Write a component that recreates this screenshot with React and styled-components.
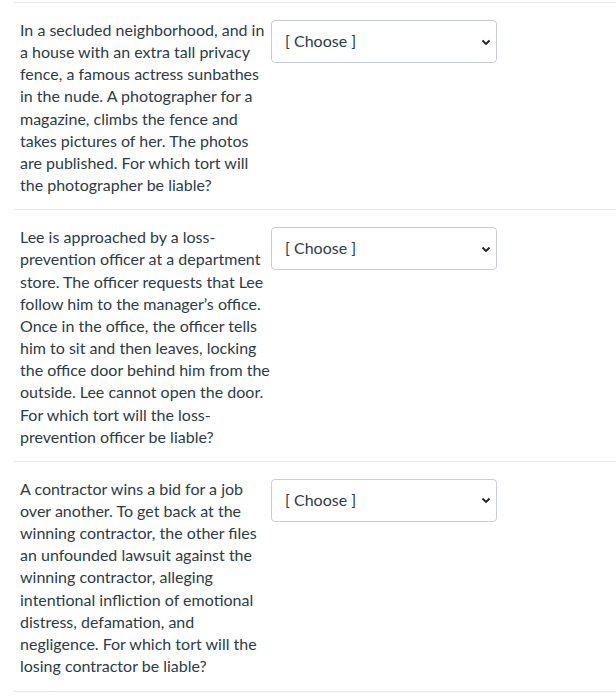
import styled, { createGlobalStyle } from "styled-components";

const GlobalStyle = createGlobalStyle`
  body {
    margin: 0;
    background: #fff;
    font-family: Lato, "Noto Sans", sans-serif;
    color: #2d3b45;
  }
`;

const List = styled.div`
  padding: 2px 0 0 14px;
`;

const Row = styled.div`
  display: flex;
  align-items: flex-start;
  gap: 1px;
  border-top: 1px solid #e4e6e8;
  padding: 16px 0 ${(p) => p.$bottom || 12}px 6px;
  &:last-child {
    border-bottom: 1px solid #e4e6e8;
  }
`;

const Question = styled.div`
  width: 250px;
  font-size: 16px;
  line-height: 22.15px;
`;

const Select = styled.div`
  width: 224px;
  height: 41px;
  margin-top: 1px;
  border: 1px solid #c7cdd1;
  border-radius: 4px;
  box-sizing: content-box;
  display: flex;
  align-items: center;
  font-size: 16px;
  color: #2d3b45;
  white-space: pre;
`;

const Label = styled.span`
  margin-left: 13px;
  flex: 1;
  margin-top: -2px;
`;

const Chevron = styled.svg`
  width: 10px;
  height: 10px;
  margin-right: 5px;
`;

const questions = [
  {
    text: "In a secluded neighborhood, and in a house with an extra tall privacy fence, a famous actress sunbathes in the nude. A photographer for a magazine, climbs the fence and takes pictures of her. The photos are published. For which tort will the photographer be liable?",
    bottom: 13,
  },
  {
    text: "Lee is approached by a loss-prevention officer at a department store. The officer requests that Lee follow him to the manager\u2019s office. Once in the office, the officer tells him to sit and then leaves, locking the office door behind him from the outside. Lee cannot open the door. For which tort will the loss-prevention officer be liable?",
    bottom: 13,
  },
  {
    text: "A contractor wins a bid for a job over another. To get back at the winning contractor, the other files an unfounded lawsuit against the winning contractor, alleging intentional infliction of emotional distress, defamation, and negligence. For which tort will the losing contractor be liable?",
    bottom: 14,
  },
];

export default function App() {
  return (
    <>
      <GlobalStyle />
      <List>
        {questions.map((q, i) => (
          <Row key={i} $bottom={q.bottom}>
            <Question>{q.text}</Question>
            <Select>
              <Label>[ Choose ]</Label>
              <Chevron viewBox="0 0 10 10">
                <path d="M1.5 3.5 L5 7 L8.5 3.5" fill="none" stroke="#222" strokeWidth="1.8" />
              </Chevron>
            </Select>
          </Row>
        ))}
      </List>
    </>
  );
}
